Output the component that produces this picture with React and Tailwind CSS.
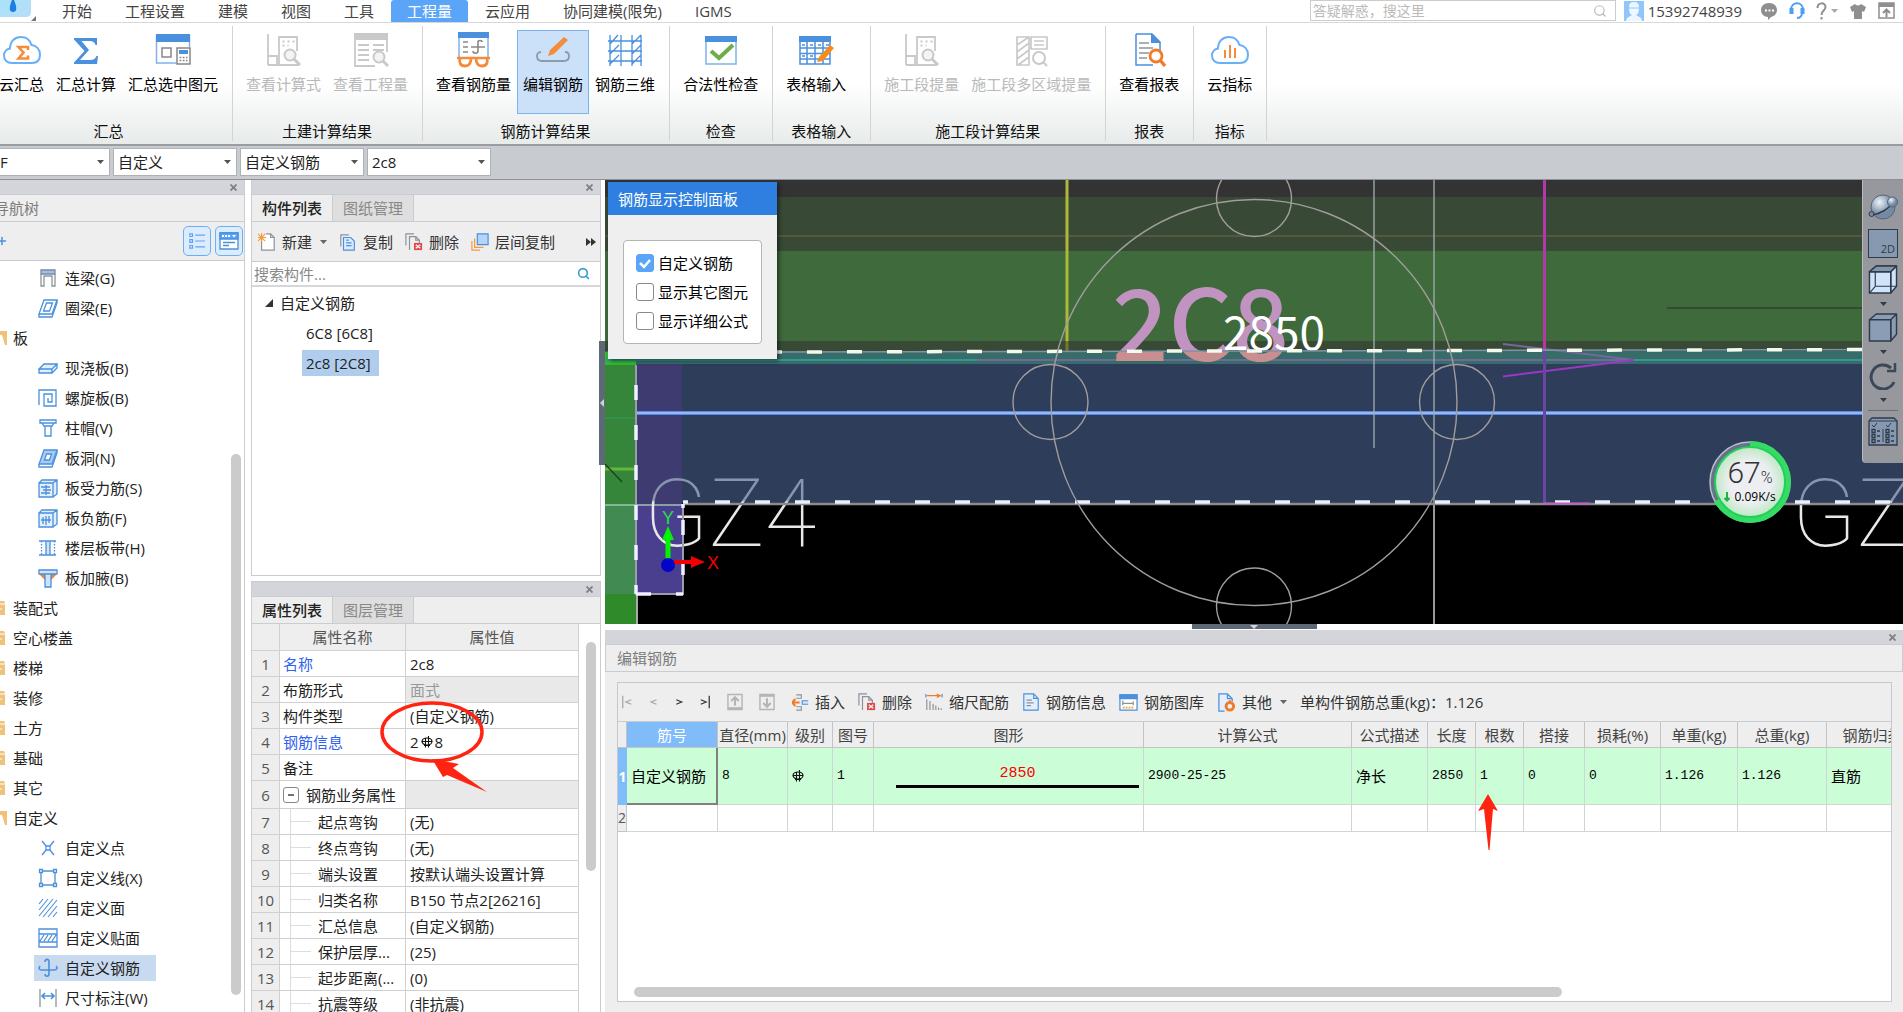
import React, { useState } from 'react';
import { Search, Plus } from 'lucide-react';
import clsx from 'clsx';

const BLUE = '#4a90dd';
const GRAY = '#c9c9c9';

// ---------- shared bits ----------

const Svg = ({ size = 20, children, className = '' }) => (
  <svg width={size} height={size} viewBox="0 0 20 20" fill="none" stroke={BLUE} strokeWidth="1.3" className={clsx('shrink-0', className)} aria-hidden="true">
    {children}
  </svg>
);

const Caret = ({ className = 'text-[#555]' }) => (
  <svg width="7" height="4" viewBox="0 0 7 4" className={clsx('shrink-0', className)} aria-hidden="true">
    <path d="M0 0h7L3.5 4z" fill="currentColor" />
  </svg>
);

const Rebar = () => (
  <svg width="12" height="12" viewBox="0 0 12 12" fill="none" stroke="#111" className="inline-block shrink-0" aria-label="C">
    <ellipse cx="6" cy="5.500" rx="5" ry="3.500" strokeWidth="1.200" />
    <path d="M4.500 2v9.500M7.500 0v11.500M1 5.500h10M3 9.500h6" strokeWidth="1.100" />
  </svg>
);

const PanelStrip = () => (
  <div className="flex h-[14px] shrink-0 items-center justify-end bg-[#d3d5db] pr-1.5">
    <button aria-label="关闭" className="flex size-2.5 items-center justify-center text-[#808080]">
      <svg width="7" height="7" viewBox="0 0 7 7" stroke="currentColor" strokeWidth="1.8"><path d="M.5.5l6 6M6.5.5l-6 6" /></svg>
    </button>
  </div>
);

const PanelTabs = ({ tabs }) => {
  const [active, setActive] = useState(0);
  return (
    <div className="flex h-7 shrink-0 border-y border-[#c9ccd1] bg-[#eee]">
      {tabs.map((t, i) => (
        <button
          key={t}
          onClick={() => setActive(i)}
          className={clsx('w-[81px] border-r border-[#c9ccd1]', i === active ? 'font-medium text-[#222]' : 'bg-[#dedede] text-[#888]')}
        >
          {t}
        </button>
      ))}
    </div>
  );
};

// ---------- ribbon icons (36 x 36) ----------

const Big = ({ children }) => (
  <svg width="36" height="36" viewBox="0 0 36 36" fill="none" aria-hidden="true">{children}</svg>
);

const cloud = 'M9 31C4 31 1 28 1 23.500C1 19.500 4 17 7 16.500C7 9 12 5 18 5C23 5 27 8 28.500 13C33 13.500 37 17 37 22.500C37 28 34 31 29 31Z';

const CloudSum = () => (
  <svg width="40" height="36" viewBox="0 0 38 36" fill="none" aria-hidden="true">
    <path d={cloud} stroke="#6ab0f8" strokeWidth="2" />
    <path d="M25 18v-3H15.500l5 5.500-5 6H25v-3" stroke="#f58c3c" strokeWidth="2.600" />
  </svg>
);
const CloudIndex = () => (
  <svg width="40" height="36" viewBox="0 0 38 36" fill="none" aria-hidden="true">
    <path d={cloud} stroke="#6ab0f8" strokeWidth="2" />
    <path d="M14 18v8M19 13v13M24 16v10" stroke="#f58c3c" strokeWidth="2" />
  </svg>
);
const Sigma = () => (
  <Big><path d="M6 6h23v7h-1.500c-1-3-2.500-4-6-4h-8L21 18l-9 10h10c3.500 0 5-1 6.500-4H30l-1 8H6v-1.500L16.500 19 6 7.500z" fill="#4a90dd" /></Big>
);
const SumPick = () => (
  <Big>
    <path d="M1.500 3v28h20M34.500 3v12" stroke="#7fb2ea" strokeWidth="1.500" />
    <path d="M1 2h34v8H1z" fill="#4a90dd" />
    <path d="M7 16h9v9H7z" stroke="#888" strokeWidth="1.500" />
    <path d="M22 16h13v16H22z" fill="#fff" stroke="#888" strokeWidth="1.500" />
    <path d="M24 18h9v4h-9z" fill="#4a90dd" />
    <path d="M24.500 25.500h8M24.500 28.500h8" stroke="#888" strokeWidth="1.600" strokeDasharray="1.800 1.400" />
  </Big>
);
const CheckCalc = () => (
  <Big>
    <path d="M2 2v31M2 24h9v9M2 33h31M13 19V5h18v14M13 19v14" stroke={GRAY} strokeWidth="1.800" />
    <path d="M16.500 9.500h12M16.500 13.500h6" stroke={GRAY} strokeWidth="2" strokeDasharray="2 3" />
    <circle cx="24" cy="23" r="5.500" fill="#f4f4f4" stroke={GRAY} strokeWidth="2" />
    <path d="M28 27l6 6" stroke={GRAY} strokeWidth="3" />
  </Big>
);
const CheckQty = () => (
  <Big>
    <path d="M1 1h34v7H1z" fill={GRAY} />
    <path d="M2 8v26h20M34 8v12M5 13h11M20 13h11M5 18h11M20 18h11M5 23h11M5 28h11" stroke={GRAY} strokeWidth="1.800" />
    <circle cx="26" cy="25" r="5.500" fill="#f4f4f4" stroke={GRAY} strokeWidth="2" />
    <path d="M30 29l5 5" stroke={GRAY} strokeWidth="3" />
  </Big>
);
const RebarQty = () => (
  <Big>
    <path d="M3 1v25M32 1v25" stroke="#7fb2ea" strokeWidth="1.500" />
    <path d="M2 0h31v6H2z" fill="#4a90dd" />
    <path d="M7 10h5M7 15h5M7 20h5M15 15h14M22 10c0-2 4-2 4 0M22 10v9c0 3-5 3-5 0" stroke="#888" strokeWidth="1.600" />
    <path d="M1 26h33" stroke="#f58c3c" strokeWidth="2.500" />
    <path d="M4 26c-1 4 0 8 5 8 4 0 6-3 6-8M20 26c0 5 2 8 6 8 5 0 6-4 5-8" stroke="#f58c3c" strokeWidth="2.800" />
  </Big>
);
const RebarEdit = () => (
  <Big>
    <path d="M6 20c-3 0-4 2-4 4 0 3 2 5 5 5h22c3 0 5-2 5-5 0-2-1-4-4-4" stroke="#8e9aa8" strokeWidth="1.800" />
    <path d="M15 18L29 5l4 3-14 14-6 2z" fill="#f58c3c" />
  </Big>
);
const Rebar3D = () => (
  <Big>
    <path d="M3 3v31M14 3v31M25 3v31M34 3v31M1 9h34M1 19h34M1 29h34M3 12l8-9M25 12l9-9M3 22l9-9M25 22l9-9M3 32l9-9M25 32l9-9" stroke={BLUE} strokeWidth="1.300" />
  </Big>
);
const Legal = () => (
  <Big>
    <path d="M3 5h30v27H3z" fill="#fff" stroke="#7fb2ea" strokeWidth="1.500" />
    <path d="M2 4h32v6H2z" fill="#4a90dd" />
    <path d="M8 19l8 7 14-13" stroke="#6fad4a" strokeWidth="4" />
  </Big>
);
const TableIn = () => (
  <Big>
    <path d="M2 5h30v27H2zM9 10v22M17 10v22M25 10v22M2 16h30M2 21.500h30M2 27h30" stroke={BLUE} strokeWidth="1.500" />
    <path d="M1 4h32v6H1z" fill="#4a90dd" />
    <path d="M4 13h3M12 13h3M20 13h3M28 13h3M4 24h3M12 24h3" stroke={BLUE} strokeWidth="1.300" />
    <path d="M21 25L32 13l4 3-11 13-6 1z" fill="#f58c1c" />
  </Big>
);
const MultiZone = () => (
  <Big>
    <path d="M4 5h12v28H4zM18 5h16v12H18zM16 5v28M4 13l12-8M4 20l12-9M4 27l12-9M5 33l11-8M21 9h10M21 13h10" stroke={GRAY} strokeWidth="1.700" />
    <circle cx="26" cy="26" r="6" stroke={GRAY} strokeWidth="2" />
    <path d="M30 30l4 4" stroke={GRAY} strokeWidth="2" />
  </Big>
);
const Report = () => (
  <Big>
    <path d="M5 2h16l8 8v10M5 2v31h17" stroke={BLUE} strokeWidth="1.500" />
    <path d="M20 1l10 10H20z" fill="#4a90dd" />
    <path d="M8 11h10M8 16h14M8 21h10M8 26h8" stroke="#8c959e" strokeWidth="1.600" />
    <circle cx="25" cy="24" r="6" stroke="#f07c2a" strokeWidth="2.800" fill="#fff" />
    <path d="M29 28l5 6" stroke="#f07c2a" strokeWidth="3.500" />
  </Big>
);

const RIBBON = [
  { title: '汇总', items: [['云汇总', CloudSum], ['汇总计算', Sigma], ['汇总选中图元', SumPick]] },
  { title: '土建计算结果', items: [['查看计算式', CheckCalc, true], ['查看工程量', CheckQty, true]] },
  { title: '钢筋计算结果', items: [['查看钢筋量', RebarQty], ['编辑钢筋', RebarEdit], ['钢筋三维', Rebar3D]] },
  { title: '检查', items: [['合法性检查', Legal]] },
  { title: '表格输入', items: [['表格输入', TableIn]], wide: true },
  { title: '施工段计算结果', items: [['施工段提量', CheckCalc, true], ['施工段多区域提量', MultiZone, true]] },
  { title: '报表', items: [['查看报表', Report]] },
  { title: '指标', items: [['云指标', CloudIndex]] },
];

const MENU = ['开始', '工程设置', '建模', '视图', '工具', '工程量', '云应用', '协同建模(限免)', 'IGMS'];

const TopBar = () => (
  <header className="flex h-[23px] items-start border-b border-[#d8d8d8] bg-white">
    <div className="relative h-full w-[46px] shrink-0">
      <svg width="40" height="23" viewBox="0 0 40 23" aria-hidden="true">
        <defs>
          <linearGradient id="logo" x1="0" y1="0" x2="1" y2="1"><stop stopColor="#a9e3fb" /><stop offset="1" stopColor="#b9dcf7" /></linearGradient>
        </defs>
        <path d="M0 0h31v12q0 5-5 5H0z" fill="url(#logo)" />
        <path d="M12 0q-5 12 1 12T14 0z" fill="#1c7fe0" />
        <path d="M36 16v5h-5z" fill="#777" />
      </svg>
    </div>
    <nav className="flex h-full gap-px">
      {MENU.map((m) => (
        <button key={m} className={clsx('h-full px-4 text-[#444]', m === '工程量' && 'rounded-t-[3px] bg-[#5aa5f7] text-white')}>{m}</button>
      ))}
    </nav>
    <div className="ml-auto flex items-center pr-2">
      <label className="flex h-[21px] w-[306px] items-center border border-[#ccc] pr-2">
        <input aria-label="搜索" placeholder="答疑解惑，搜这里" className="min-w-0 flex-1 px-0.5 text-sm outline-none placeholder:text-[#bbb]" />
        <Search size={14} className="text-[#bbb]" />
      </label>
      <svg width="20" height="20" viewBox="0 0 20 20" className="mr-1 ml-2" aria-hidden="true">
        <path d="M0 0h20v20H0z" fill="#90c6fa" />
        <path d="M5 6q0-5 5-5t5 5v1q0 6-3 7l5 3 1 3H2l1-3 5-3Q5 13 5 7z" fill="#eef7ff" />
        <path d="M4 7h12" stroke="#90c6fa" />
      </svg>
      <span className="text-[#444]">15392748939</span>
      <div className="ml-[18px] flex items-center gap-[11px] text-[#8f8f8f]">
        <button aria-label="消息">
          <svg width="18" height="18" viewBox="0 0 18 18"><path d="M9 1c5 0 8 3 8 7 0 3-2 6-6 7l-3 3v-3c-4 0-7-3-7-7 0-4 3-7 8-7z" fill="currentColor" /><path d="M5 8.500h9" stroke="#fff" strokeWidth="2" strokeDasharray="2 1.500" /></svg>
        </button>
        <button aria-label="客服">
          <svg width="16" height="18" viewBox="0 0 16 18" fill="none" stroke="#4a9ef5"><path d="M2 8c0-9 12-9 12 0" strokeWidth="2" /><path d="M2.500 6v6M13.500 6v6" strokeWidth="4" /><path d="M13 12q-1 4-5 4" strokeWidth="2" /></svg>
        </button>
        <button aria-label="帮助" className="flex items-center gap-1">
          <svg width="11" height="18" viewBox="0 0 11 18" fill="none" stroke="currentColor" strokeWidth="2"><path d="M1.500 6c0-6 8-6 8-1 0 4-4 3-4 8M5.500 15v2.500" /></svg>
          <Caret className="text-[#aaa]" />
        </button>
        <button aria-label="皮肤">
          <svg width="18" height="18" viewBox="0 0 18 18"><path d="M6 2q3 3 6 0l5 3-2 5-2-1v8H5V9l-2 1-2-5z" fill="currentColor" /></svg>
        </button>
        <button aria-label="收起">
          <svg width="17" height="17" viewBox="0 0 17 17" fill="none" stroke="currentColor"><path d="M1 1h15v15H1z" strokeWidth="1.500" /><path d="M1 3h15" strokeWidth="4" /><path d="M8.500 15V8M5 11l3.500-3.500L12 11" strokeWidth="2" /></svg>
        </button>
      </div>
    </div>
  </header>
);

const Ribbon = () => (
  <div className="flex h-[123px] overflow-hidden border-b-2 border-[#999da2] bg-linear-to-b from-white from-50% to-[#e7ebea] py-[3px]">
    <div className="-ml-3.5 flex">
      {RIBBON.map((g) => (
        <section key={g.title} className={clsx('flex flex-col border-r border-[#d3d3d3] pr-2 pl-[7px]', g.wide && 'w-[98px]')}>
          <div className="flex h-[95px] pt-1">
            {g.items.map(([name, Icon, off]) => (
              <button
                key={name}
                disabled={off}
                className={clsx(
                  'flex h-[84px] flex-col items-center border px-[5px] whitespace-nowrap',
                  name === '编辑钢筋' ? 'border-[#7db4ee] bg-[#cbe1f9]' : 'border-transparent',
                  off ? 'text-[#b9b9b9]' : 'text-black'
                )}
              >
                <span className="flex h-[38px] items-center"><Icon /></span>
                <span className="mt-[5px]">{name}</span>
              </button>
            ))}
          </div>
          <div className="text-center text-[#111]">{g.title}</div>
        </section>
      ))}
    </div>
  </div>
);

const COMBOS = [['楼层', 'F'], ['类型', '自定义'], ['构件类型', '自定义钢筋'], ['构件', '2c8']];

const ComboBar = () => (
  <div className="flex h-[34px] gap-[3px] overflow-hidden border-b border-[#8d9096] bg-[#c8cbd0] pt-0.5">
    {COMBOS.map(([label, v], i) => (
      <div key={label} className={clsx('relative', i === 0 ? 'w-[110px]' : 'w-[124px]')}>
        <select aria-label={label} defaultValue={v} className={clsx('h-7 w-full appearance-none border border-[#aeb1b5] bg-white outline-none', i === 0 ? 'border-l-0 pl-0' : 'pl-1')}>
          <option>{v}</option>
        </select>
        <span className="pointer-events-none absolute top-3 right-1.5 flex"><Caret /></span>
      </div>
    ))}
  </div>
);

// ---------- navigation tree ----------

const NAV_ICONS = {
  lianliang: <><path d="M3 2h14v4H3z" fill="#9bc1ee" stroke="#7b8a99" /><path d="M3 6v12h3V8h8v10h3V6" stroke="#8a949e" /></>,
  quanliang: <><path d="M6 2h13l-5 14H1zM8.500 5h6l-3 8h-6z" /><path d="M1 16v3h13l5-14V2" /></>,
  xianjiao: <path d="M1 11l5-5h13l-5 5zM1 11v4h13v-4M14 15l5-5V6" fill="#e3effc" />,
  luoxuan: <path d="M1 17V2h17v16H6V6h8v8h-4v-4" />,
  zhumao: <path d="M2 2h16v3H2zM4 5l2 3h8l2-3M7 8v10h6V8" />,
  bandong: <><path d="M6 2h13l-5 14H1z" fill="#a9cbf2" /><path d="M8.500 6h5l-2 6h-5z" fill="#fff" /><path d="M1 16v3h13l5-14V2" /></>,
  shouli: <><path d="M1 5h14v14H1zM1 5l3-3h15v14l-4 3M15 5l4-3" fill="#e3effc" /><path d="M3 9h9M3 15h9M8 7v10M5 12h8" /></>,
  fujin: <><path d="M1 5h14v14H1zM1 5l3-3h15v14l-4 3M15 5l4-3" fill="#e3effc" /><path d="M3 12h10M5 16V9M8 8v9M11 8v7" /></>,
  bandai: <><path d="M1 3h17M1 17h17M8 3h4v14H8z" fill="#cfe2f9" /><path d="M3.500 3v14M16.500 3v14" strokeDasharray="1.500 1.500" /></>,
  jiaye: <><path d="M1 6l6 6V6zM19 6l-6 6V6z" fill="#f58220" stroke="none" /><path d="M1 2h18v4H1zM7 6v13h6V6" fill="#cfe2f9" /></>,
  dian: <><path d="M4 3l4 5M12 12l4 5M16 3l-4 5M8 12l-4 5" /><path d="M8 8h4v4H8z" /></>,
  xian: <><path d="M3 3h14v14H3z" /><path d="M1.500 1.500h3v3h-3zM15.500 1.500h3v3h-3zM1.500 15.500h3v3h-3zM15.500 15.500h3v3h-3z" fill="#fff" /></>,
  mian: <path d="M1 6l4-5M1 12L10 1M1 18L15 1M5 19L19 2M10 19l9-11M15 19l4-5" strokeWidth="1.100" />,
  tiemian: <path d="M1 1h18v18H1zM1 6h18M1 14h18M2 13l4-6M6 13l4-6M10 13l4-6M14 13l4-6" />,
  gangjin: <path d="M2 8c-2 3 0 4 2 4h12c3 0 4-2 2-4M7 4c0-3 4-4 4 0v12c0 3-4 3-4 0" strokeWidth="1.600" />,
  chicun: <><path d="M2 1v18M18 1v18" stroke="#8a949e" /><path d="M4 8h12M7 5L4 8l3 3M13 5l3 3-3 3" strokeWidth="1.600" /></>,
};

const NAV = [
  ['lianliang', '连梁(G)'], ['quanliang', '圈梁(E)'], [null, '板', true], ['xianjiao', '现浇板(B)'], ['luoxuan', '螺旋板(B)'],
  ['zhumao', '柱帽(V)'], ['bandong', '板洞(N)'], ['shouli', '板受力筋(S)'], ['fujin', '板负筋(F)'], ['bandai', '楼层板带(H)'],
  ['jiaye', '板加腋(B)'], [null, '装配式'], [null, '空心楼盖'], [null, '楼梯'], [null, '装修'], [null, '土方'], [null, '基础'],
  [null, '其它'], [null, '自定义', true], ['dian', '自定义点'], ['xian', '自定义线(X)'], ['mian', '自定义面'],
  ['tiemian', '自定义贴面'], ['gangjin', '自定义钢筋'], ['chicun', '尺寸标注(W)'],
];

const NavTree = () => (
  <aside className="flex w-[245px] shrink-0 flex-col border-r border-[#c9ccd1] bg-white">
    <PanelStrip />
    <div className="flex h-7 shrink-0 items-center overflow-hidden border-y border-[#c9ccd1] bg-[#eee] text-[#7c7c7c]">
      <span className="-ml-1.5">导航树</span>
    </div>
    <div className="flex h-[39px] shrink-0 items-center border-b border-[#c9ccd1] bg-[#eee]">
      <button aria-label="添加" className="-ml-1"><Plus size={12} strokeWidth={3} color={BLUE} /></button>
      <div className="ml-auto flex gap-1 pr-px">
        {['列表', '面板'].map((n, i) => (
          <button key={n} aria-label={n} className="flex h-[30px] w-7 items-center justify-center rounded-[5px] border border-[#6ab0f8] bg-[#dcecfc]">
            {i === 0
              ? <Svg size={18}><path d="M2 2h3v3H2zM2 8.500h3v3H2zM2 15h3v3H2zM8 3.500h11M8 10h11M8 16.500h11" stroke="#5aa5f7" /></Svg>
              : <Svg size={20}><path d="M1 2h18v16H1z" fill="#fff" /><path d="M1 2h18v6H1z" fill="#5aa5f7" /><path d="M3 5h8" stroke="#fff" strokeWidth="2" strokeDasharray="2 1" /><path d="M13 4h4l-2 2.500z" fill="#fff" stroke="none" /><path d="M4 11.500h12M4 14.500h6" /></Svg>}
          </button>
        ))}
      </div>
    </div>
    <div className="relative min-h-0 flex-1 overflow-hidden pt-0.5">
      <ul>
        {NAV.map(([icon, name, open]) => (
          <li key={name} className="flex h-[30px] items-center">
            {icon ? (
              <button className={clsx('ml-[34px] flex h-[26px] items-center gap-[7px] px-1 pr-4', name === '自定义钢筋' && 'bg-[#c8daf0]')}>
                <Svg>{NAV_ICONS[icon]}</Svg>{name}
              </button>
            ) : (
              <button className="flex items-center gap-1.5">
                <svg width="7" height="16" viewBox="0 0 7 16" aria-hidden="true">
                  {open ? <path d="M0 1h7v14H5L2 5H0z" fill="#efc27a" /> : <><path d="M0 1h4l1 2v12H0z" fill="#efc27a" /><path d="M0 4h5M0 9h2" stroke="#fff" /></>}
                </svg>
                {name}
              </button>
            )}
          </li>
        ))}
      </ul>
      <div className="absolute top-[193px] right-[3px] h-[541px] w-2.5 rounded-full bg-[#cbcbcb]" />
    </div>
  </aside>
);

// ---------- component list + properties ----------

const DeleteIcon = ({ size = 18 }) => (
  <Svg size={size}>
    <path d="M1 14V1h9M5 19V4h7l4 4v4M12 4v4h4" stroke="#8c9299" />
    <path d="M10 11h9v8h-9z" fill="#e14b4b" stroke="none" /><path d="M12 13l5 4M17 13l-5 4" stroke="#fff" />
  </Svg>
);

const ToolButton = ({ icon, children, caret }) => (
  <button className="flex items-center gap-1.5 whitespace-nowrap text-[#333]">
    {icon}<span>{children}</span>{caret && <Caret className="ml-0.5 text-[#666]" />}
  </button>
);

const ComponentList = () => (
  <section className="flex h-[396px] shrink-0 flex-col border border-t-0 border-[#c9ccd1] bg-white">
    <PanelStrip />
    <PanelTabs tabs={['构件列表', '图纸管理']} />
    <div className="flex h-10 shrink-0 items-center gap-3 border-b border-[#c9ccd1] bg-[#eee] pr-1 pl-1.5">
      <ToolButton caret icon={<Svg size={18}><path d="M4 6v13h14V5l-4-4H9M14 1v4h4" stroke="#8c9299" fill="#fff" /><path d="M0 1l8 8M8 1L0 9M4 0v10M0 5h9" stroke="#f79a3c" strokeWidth="1.200" /></Svg>}>新建</ToolButton>
      <ToolButton icon={<Svg size={18}><path d="M2 15V2h9" stroke="#8c9299" /><path d="M5 5h8l4 4v10H5zM8 11h6M8 14h6M8 8h3" fill="#dcebfc" /></Svg>}>复制</ToolButton>
      <ToolButton icon={<DeleteIcon />}>删除</ToolButton>
      <ToolButton icon={<Svg size={18}><path d="M1 9v10h9M4 6v10h10" stroke="#f79a3c" /><path d="M7 1h12v12H7z" fill="#b5d4f8" /></Svg>}>层间复制</ToolButton>
      <button aria-label="更多" className="ml-auto">
        <svg width="10" height="8" viewBox="0 0 10 8"><path d="M0 0l5 4-5 4zM5 0l5 4-5 4z" fill="#333" /></svg>
      </button>
    </div>
    <label className="flex h-[25px] shrink-0 items-center border-b-2 border-[#d5d7db] pr-2.5 pl-0.5">
      <input aria-label="搜索构件" placeholder="搜索构件..." className="min-w-0 flex-1 outline-none placeholder:text-[#888]" />
      <Search size={13} color="#3a9bd0" strokeWidth={3} />
    </label>
    <ul className="pt-px">
      <li className="flex h-[30px] items-center gap-[7px] pl-[13px]">
        <svg width="8" height="8" viewBox="0 0 8 8" aria-hidden="true"><path d="M8 0v8H0z" fill="#333" /></svg>自定义钢筋
      </li>
      <li className="flex h-[30px] items-center pl-[50px]"><button className="h-[26px] px-1">6C8 [6C8]</button></li>
      <li className="flex h-[30px] items-center pl-[50px]"><button className="h-[26px] bg-[#b1cdee] pr-2 pl-1">2c8 [2C8]</button></li>
    </ul>
  </section>
);

const PROPS = [
  ['名称', '2c8', 'link'], ['布筋形式', '面式', 'off'], ['构件类型', '(自定义钢筋)'], ['钢筋信息', null, 'link'], ['备注', ''],
  ['钢筋业务属性', '', 'group'], ['起点弯钩', '(无)', 'sub'], ['终点弯钩', '(无)', 'sub'], ['端头设置', '按默认端头设置计算', 'sub'],
  ['归类名称', 'B150 节点2[26216]', 'sub'], ['汇总信息', '(自定义钢筋)', 'sub'], ['保护层厚...', '(25)', 'sub'],
  ['起步距离(...', '(0)', 'sub'], ['抗震等级', '(非抗震)', 'sub'],
];

const PropertyPanel = () => (
  <section className="relative flex min-h-0 flex-1 flex-col overflow-hidden border border-b-0 border-[#c9ccd1] bg-white">
    <PanelStrip />
    <PanelTabs tabs={['属性列表', '图层管理']} />
    <table className="w-[327px] table-fixed border-separate border-spacing-0">
      <colgroup><col className="w-7" /><col className="w-[126px]" /><col /></colgroup>
      <thead>
        <tr className="h-[27px] bg-[#eee] text-[#555]">
          <th className="border-r border-b border-[#d0d0d0]" />
          <th className="border-r border-b border-[#d0d0d0] font-normal">属性名称</th>
          <th className="border-r border-b border-[#d0d0d0] font-normal">属性值</th>
        </tr>
      </thead>
      <tbody>
        {PROPS.map(([name, value, kind], i) => (
          <tr key={name} className={kind === 'group' ? 'h-7' : 'h-[26px]'}>
            <td className="border-r border-b border-[#d0d0d0] bg-[#eee] text-center text-[#555]">{i + 1}</td>
            <td className={clsx('border-r border-b border-[#d0d0d0] whitespace-nowrap', kind === 'link' && 'text-[#2f62f0]')}>
              {kind === 'group' && (
                <span className="flex items-center gap-[7px] pl-[3px]">
                  <button aria-label="收起" className="flex size-4 items-center justify-center rounded-[3px] border border-[#888] text-[#444]">
                    <svg width="6" height="2" viewBox="0 0 6 2"><path d="M0 1h6" stroke="currentColor" strokeWidth="1.500" /></svg>
                  </button>
                  {name}
                </span>
              )}
              {kind === 'sub' && (
                <span className="ml-2.5 flex h-[25px] items-center gap-[7px] border-l border-[#ddd]">
                  <span className="h-px w-5 bg-[#ddd]" />{name}
                </span>
              )}
              {kind !== 'group' && kind !== 'sub' && <span className="pl-[3px]">{name}</span>}
            </td>
            <td className={clsx('border-r border-b border-[#d0d0d0] pl-1 whitespace-nowrap', kind === 'off' && 'bg-[#e9e9e9] text-[#999]', kind === 'group' && 'bg-[#e9e9e9]')}>
              {value ?? <span className="flex items-center gap-0.5">2<Rebar />8</span>}
            </td>
          </tr>
        ))}
      </tbody>
    </table>
    <div className="absolute top-[60px] right-1 h-[229px] w-2.5 rounded-full bg-[#cbcbcb]" />
    <svg width="120" height="96" viewBox="376 696 120 96" className="pointer-events-none absolute top-[115px] left-[124px]" aria-hidden="true">
      <ellipse cx="432" cy="731" rx="50" ry="29" fill="none" stroke="#ff2412" strokeWidth="3.500" />
      <path d="M432 758l27 5-6 4 34 24-40-17-4 2z" fill="#ff2412" />
    </svg>
  </section>
);

// ---------- CAD viewport ----------

const Drawing = () => (
  <svg className="h-full w-full" viewBox="605 180 1298 444" preserveAspectRatio="xMinYMin slice" fill="none">
    <defs>
      <linearGradient id="mark" gradientUnits="userSpaceOnUse" x1="0" y1="280" x2="0" y2="370">
        <stop offset="0.78" stopColor="#c093c0" /><stop offset="0.78" stopColor="#c98f90" />
      </linearGradient>
      <linearGradient id="col" gradientUnits="userSpaceOnUse" x1="0" y1="440" x2="0" y2="560">
        <stop offset="0.500" stopColor="#8795ae" /><stop offset="0.520" stopColor="#e8e8e8" />
      </linearGradient>
    </defs>
    <path d="M605 180h1298v444H605z" fill="#000" />
    <path d="M605 180h1298v17H605z" fill="#333" />
    <path d="M605 197h1298v54H605z" fill="#384a36" />
    <path d="M605 251h1298v90H605z" fill="#3f6a3b" />
    <path d="M605 341h1298v10H605z" fill="#384a36" />
    <path d="M605 351h1298v13H605z" fill="#386c69" />
    <path d="M605 364h1298v139H605z" fill="#2e3d5a" />
    <path d="M605 236h1298" stroke="#55573f" strokeWidth="2" />
    <path d="M1667 308h236" stroke="#344a32" strokeWidth="2" />

    {/* left slab edge and column */}
    <path d="M605 352h31v13h-31z" fill="#33b92f" />
    <path d="M605 365h31v140h-31z" fill="#35863b" />
    <path d="M605 505h31v89h-31z" fill="#418a52" />
    <path d="M605 594h31v30h-31z" fill="#2f8a2a" />
    <path d="M605 418h31" stroke="#2f9b5c" />
    <path d="M605 469h31" stroke="#63b636" strokeWidth="3" />
    <path d="M605 464l17 18" stroke="#1f4020" strokeWidth="1.500" />
    <path d="M636 364h46v141h-46z" fill="#3d3b70" />
    <path d="M636 505h46v89h-46z" fill="#4a3f8f" />
    <path d="M637 594v30" stroke="#aaa" strokeWidth="2" />
    <path d="M605 505h78" stroke="#9fc4b0" strokeWidth="1.500" />

    {/* beam lines */}
    <path d="M605 360h372M1634 360h269" stroke="#2f9a93" strokeWidth="2" />
    <path d="M977 360h657M1634 360l-131-16" stroke="#71699c" strokeWidth="2" />
    <path d="M1503 376.500l131-16.500" stroke="#9a38c8" strokeWidth="2" />
    <path d="M636 413h1267" stroke="#5b88dc" strokeWidth="4" />
    <path d="M636 413h1267" stroke="#93b8fb" strokeWidth="2" />
    <path d="M1067 180v161" stroke="#b0b838" strokeWidth="3" />
    <path d="M1067 341v10" stroke="#75762c" strokeWidth="3" />
    <path d="M1374 180v268M1434 180v323" stroke="#a3b0b0" strokeWidth="1.300" />
    <path d="M1434 503v121" stroke="#ccc" strokeWidth="1.500" />
    <path d="M1544.500 180v170" stroke="#b33aa6" strokeWidth="3" />
    <path d="M1544.500 350v153" stroke="#6b44a4" strokeWidth="3" />

    {/* member marks */}
    <text x="1112" y="361" fontSize="99" fill="url(#mark)" className="font-['Noto_Sans_CJK_SC',sans-serif] font-medium">2C8</text>
    <text x="1223" y="350" fontSize="46" fill="#fff" className="font-['Noto_Sans_CJK_SC',sans-serif]">2850</text>
    <text x="644" y="546" fontSize="94" fill="url(#col)" className="font-[Roboto,sans-serif] font-thin">GZ4</text>
    <text x="1792" y="546" fontSize="94" fill="url(#col)" className="font-[Roboto,sans-serif] font-thin">GZ4</text>

    {/* selection outline */}
    <path d="M777 352L1903 349.500" stroke="#7f93a8" strokeWidth="1.500" />
    <path d="M767 352L1903 349.500" stroke="#f4f8ee" strokeWidth="3.500" strokeDasharray="15 25" />
    <path d="M683 504h1220" stroke="#8b8b8b" strokeWidth="2.500" />
    <path d="M683 502h5M715 502h1188" stroke="#e8f0fc" strokeWidth="3.500" strokeDasharray="15 25" />
    <path d="M636 365v229h47v-90" stroke="#9d9dac" strokeWidth="2" />
    <path d="M636 385v209M683 520v74M636 594h47M683 504v4" stroke="#f0f0ff" strokeWidth="3.500" strokeDasharray="15 25" />
    <path d="M1544 503.500h46" stroke="#c060c0" strokeWidth="2" />

    <g stroke="#a19d9c" strokeWidth="1.400">
      <circle cx="1254" cy="402.500" r="203" />
      <circle cx="1050.500" cy="402" r="37.500" />
      <circle cx="1457" cy="402" r="37.500" />
      <circle cx="1254" cy="199" r="37.500" />
      <circle cx="1254" cy="605.500" r="37.500" />
    </g>

    {/* origin axes */}
    <path d="M668 560v-22" stroke="#00f400" strokeWidth="5" /><path d="M662 540l6-14 6 14z" fill="#00f400" />
    <path d="M674 562h18" stroke="#f20000" strokeWidth="4" /><path d="M691 556l14 6-14 6z" fill="#f20000" />
    <circle cx="668" cy="565" r="7" fill="#0404c8" />
    <text x="662" y="524" fontSize="18" fill="#22e03c" className="font-['Liberation_Sans',sans-serif]">Y</text>
    <text x="707" y="569" fontSize="18" fill="#f20000" className="font-['Liberation_Sans',sans-serif]">X</text>
  </svg>
);

const OPTIONS = [['自定义钢筋', true], ['显示其它图元', false], ['显示详细公式', false]];

const DisplayPanel = () => (
  <div className="absolute top-0.5 left-[3px] w-[169px] bg-[#efefef] shadow-[2px_2px_4px_rgba(0,0,0,0.5)]">
    <div className="flex h-[33px] items-center bg-[#2e7fe0] pl-2.5 text-white">钢筋显示控制面板</div>
    <div className="p-[15px] pt-[25px]">
      <div className="flex h-[104px] flex-col justify-center rounded border border-[#b4b4b4] bg-white pl-3">
        {OPTIONS.map(([name, on]) => (
          <label key={name} className="flex h-[29px] items-center gap-1 text-black">
            <span className="relative flex size-[18px] shrink-0">
              <input type="checkbox" defaultChecked={on} className="peer size-[18px] appearance-none rounded-[3px] border border-[#8a8a8a] bg-white checked:border-[#5aa5f7] checked:bg-[#5aa5f7]" />
              <svg viewBox="0 0 18 18" className="pointer-events-none absolute inset-0 hidden peer-checked:block" fill="none" stroke="#fff" strokeWidth="2.500"><path d="M4 9l4 4 6-7" /></svg>
            </span>
            <span className="whitespace-nowrap">{name}</span>
          </label>
        ))}
      </div>
    </div>
  </div>
);

const Cube = ({ open }) => (
  <svg width="30" height="29" viewBox="0 0 30 30" stroke="#2e3b4a" strokeWidth="1.500" strokeLinejoin="round">
    <path d="M1 7l7-6h21l-6 6zM23 7l6-6v21l-6 7z" fill={open ? '#cfe4fb' : '#8a9db5'} />
    <path d="M1 7h22v22H1z" fill={open ? '#cfe4fb' : '#8a9db5'} />
    {open && <><path d="M1 7l7-6h21l-6 6z" fill="#8295ad" /><path d="M7 7v15h16M1 29l6-7M23 22l6 0" fill="none" strokeWidth="1.200" /></>}
  </svg>
);

const ViewTools = () => (
  <div className="absolute top-0 right-0 flex h-[283px] w-[41px] flex-col items-center rounded-bl border-l border-[#b9babd] bg-[#97989d] pt-3 text-[#2e3b4a]">
    <button aria-label="动态观察">
      <svg width="30" height="30" viewBox="0 0 30 30">
        <defs><radialGradient id="ball" cx="0.35" cy="0.3"><stop stopColor="#eef4fa" /><stop offset="1" stopColor="#7489a3" /></radialGradient></defs>
        <circle cx="15" cy="15" r="12" fill="url(#ball)" stroke="#53667c" />
        <path d="M4 23C12 22 21 17 25 10" fill="none" stroke="#2e3b4a" strokeWidth="1.500" />
        <circle cx="24.500" cy="10" r="5" fill="url(#ball)" stroke="#53667c" />
        <circle cx="3.500" cy="22" r="2.500" fill="#7489a3" stroke="#2e3b4a" />
      </svg>
    </button>
    <button className="mt-[7px] flex h-[29px] w-[30px] items-end justify-end border border-[#2e3b4a] bg-[#8799b0] px-0.5 text-[11px] leading-4">2D</button>
    <button aria-label="线框" className="mt-[7px]"><Cube open /></button>
    <Caret className="mt-2 shrink-0 text-[#2e3b4a]" />
    <button aria-label="实体" className="mt-[7px]"><Cube /></button>
    <Caret className="mt-2 shrink-0 text-[#2e3b4a]" />
    <button aria-label="旋转" className="mt-2">
      <svg width="28" height="28" viewBox="0 0 28 28" fill="none" stroke="#3a4857" strokeWidth="3"><path d="M25 20A12 12 0 1 1 22 6" /><path d="M26 1v8h-8" strokeWidth="2.500" /></svg>
    </button>
    <Caret className="mt-2 shrink-0 text-[#2e3b4a]" />
    <div className="mt-2 h-px w-[30px] shrink-0 bg-[#6d6e72]" />
    <button aria-label="显示设置" className="mt-1.5">
      <svg width="30" height="29" viewBox="0 0 30 29" fill="none" stroke="#2e3b4a">
        <path d="M1 4l3-3h22l3 3v24H1z" fill="#8799b0" strokeWidth="1.300" /><path d="M1 4h28M15 12v13" />
        <path d="M4 8l2 2 3-4M18 8l2 2 3-4" />
        <path d="M4 12.500h3v3H4zM4 17.500h3v3H4zM4 22.500h3v3H4zM18 12.500h3v3h-3zM18 17.500h3v3h-3zM18 22.500h3v3h-3zM9 14h3M9 19h3M9 24h3M23 14h3M23 19h3M23 24h3" strokeWidth="1.300" />
      </svg>
    </button>
  </div>
);

// floating memory / network meter
const Meter = () => (
  <div className="absolute top-[261px] right-[112px] size-[82px]">
    <svg viewBox="0 0 82 82" className="absolute inset-0" aria-hidden="true">
      <defs>
        <radialGradient id="dial"><stop offset="0.600" stopColor="#eceef2" /><stop offset="1" stopColor="#bfe9c4" /></radialGradient>
      </defs>
      <circle cx="41" cy="41" r="40" fill="#66728a" stroke="#b8bfc9" strokeWidth="1.500" />
      <circle cx="41" cy="41" r="38" fill="none" stroke="#35dc63" strokeWidth="6" pathLength="100" strokeDasharray="67 33" transform="rotate(-90 41 41)" />
      <circle cx="41" cy="41" r="35" fill="url(#dial)" stroke="#22cf5a" strokeWidth="2" />
    </svg>
    <div className="relative flex flex-col items-center pt-4 text-[#333]">
      <div className="flex items-baseline font-[Roboto,sans-serif] text-[30px] leading-8 font-light">67<span className="text-base leading-4">%</span></div>
      <div className="flex items-center gap-1 text-xs leading-4 text-black">
        <svg width="6" height="10" viewBox="0 0 6 10" fill="none" stroke="#1bb83c" strokeWidth="2" aria-hidden="true"><path d="M3 0v8M.5 6L3 8.500 5.500 6" /></svg>
        0.09K/s
      </div>
    </div>
  </div>
);

// ---------- rebar editor ----------

const COLS = ['筋号', '直径(mm)', '级别', '图号', '图形', '计算公式', '公式描述', '长度', '根数', '搭接', '损耗(%)', '单重(kg)', '总重(kg)', '钢筋归类'];
const MONO = "font-['Liberation_Mono','Noto_Sans_CJK_SC',monospace] text-[13px]";
const ROW = ['8', <Rebar />, '1', null, '2900-25-25', '净长', '2850', '1', '0', '0', '1.126', '1.126', '直筋'];

const RebarTable = () => {
  const cell = 'border-r border-b border-[#cfd5d0] p-0';
  return (
    <div className="relative min-h-0 flex-1 overflow-hidden bg-white">
      <table className="w-[1301px] table-fixed border-separate border-spacing-0 whitespace-nowrap">
        <colgroup>
          <col className="w-[9px]" /><col className="w-[91px]" /><col className="w-[70px]" /><col className="w-[45px]" /><col className="w-[41px]" />
          <col className="w-[270px]" /><col className="w-[208px]" /><col className="w-[76px]" /><col className="w-12" /><col className="w-12" />
          <col className="w-[61px]" /><col className="w-[76px]" /><col className="w-[77px]" /><col className="w-[89px]" /><col className="w-[92px]" />
        </colgroup>
        <thead>
          <tr className="h-[26px] bg-[#eee] text-[#444]">
            <th className="border-r border-b border-[#c4c4c4] p-0" />
            {COLS.map((c, i) => (
              <th key={c} className={clsx('border-r border-b border-[#c4c4c4] p-0 font-normal', i === 0 && 'bg-[#80bbfa] font-medium text-white')}>{c}</th>
            ))}
          </tr>
        </thead>
        <tbody>
          <tr className="h-[57px] bg-[#cbfdd7] text-black">
            <td className="bg-[#80bbfa] p-0 text-center text-sm font-bold text-white">1</td>
            <td className="border-r-2 border-b-2 border-[#808080] p-0 pl-1">自定义钢筋</td>
            {ROW.map((v, i) => (
              <td key={i} className={clsx(cell, 'pl-1', i !== 5 && i !== 12 && MONO)}>
                {i === 3 ? (
                  <div className="flex flex-col items-center gap-px pr-1 pl-[18px] text-[15px] text-[#f00]">
                    <span>2850</span><span className="h-[3px] w-full bg-black" />
                  </div>
                ) : v}
              </td>
            ))}
          </tr>
          <tr className="h-[27px]">
            <td className="border-r border-b border-[#c4c4c4] bg-[#eee] p-0 text-center text-sm text-[#555]">2</td>
            {COLS.map((c) => <td key={c} className={cell} />)}
          </tr>
        </tbody>
      </table>
      <div className="absolute bottom-1 left-4 h-2.5 w-[928px] rounded-full bg-[#cbcbcb]" />
      <svg width="20" height="58" viewBox="0 0 20 58" className="pointer-events-none absolute top-[72px] left-[860px]" aria-hidden="true">
        <path d="M10 0l10 17-5-2-3.500 41h-1L6 15l-6 2z" fill="#ff2412" />
      </svg>
    </div>
  );
};

const EditorTools = () => (
  <div className="flex h-[39px] shrink-0 items-center gap-[13px] border-b border-[#c9ccd1] pl-1 text-[#333]">
    <div className="flex items-center gap-4 pr-1">
      {[['首行', 'M1 0v16M12 5L5 8l7 3', 1], ['上一行', 'M11 5L4 8l7 3', 1], ['下一行', 'M3 5l7 3-7 3'], ['末行', 'M12 0v16M1 5l7 3-7 3']].map(([n, d, off]) => (
        <button key={n} aria-label={n} className={off ? 'text-[#a5a5a5]' : 'text-[#333]'}>
          <svg width="10" height="16" viewBox="0 0 13 16" fill="none" stroke="currentColor" strokeWidth="1.600"><path d={d} /></svg>
        </button>
      ))}
    </div>
    <div className="flex gap-4 pr-1 text-[#b5b5b5]">
      <button aria-label="上移">
        <svg width="16" height="18" viewBox="0 0 17 18" fill="none" stroke="currentColor"><path d="M1 1h15v16H1z" strokeWidth="1.500" /><path d="M1 16h15" strokeWidth="3" /><path d="M8.500 13V4M4.500 8l4-4 4 4" strokeWidth="2.200" /></svg>
      </button>
      <button aria-label="下移">
        <svg width="16" height="18" viewBox="0 0 17 18" fill="none" stroke="currentColor"><path d="M1 1h15v16H1z" strokeWidth="1.500" /><path d="M1 2h15" strokeWidth="3" /><path d="M8.500 5v9M4.500 10l4 4 4-4" strokeWidth="2.200" /></svg>
      </button>
    </div>
    <ToolButton icon={<Svg size={17}><path d="M5 1h6v4H5M5 19h6v-4H5" stroke="#8c9299" /><path d="M19 8h-7v4h7" fill="#cfe2f9" /><path d="M9 10H1M4 6l-4 4 4 4" stroke="#f07c2a" strokeWidth="2.500" /></Svg>}>插入</ToolButton>
    <ToolButton icon={<DeleteIcon />}>删除</ToolButton>
    <ToolButton icon={<Svg size={18}><path d="M2 3h15M13 1l4 2-4 2" stroke="#f07c2a" /><path d="M1 1v4M19 1v4" /><path d="M2 7v12M5.500 9v10M9 12v7M12 14v5M15 16v3M18 17v2" stroke="#8c9299" /></Svg>}>缩尺配筋</ToolButton>
    <ToolButton icon={<Svg size={18}><path d="M2 1h11l5 5v13H2zM13 1v5h5" fill="#e3effc" /><path d="M5 8h6M5 11h8M5 14h5" stroke="#8c9299" /></Svg>}>钢筋信息</ToolButton>
    <ToolButton icon={<Svg size={19}><path d="M1 2h18v16H1z" fill="#fff" /><path d="M1 2h18v4H1z" fill="#4a90dd" /><path d="M4 8v5M4 11h11v-2M15 13v-2" stroke="#8c9299" /><path d="M4 15.500h12" stroke="#f7a440" strokeDasharray="2 1" strokeWidth="1.800" /></Svg>}>钢筋图库</ToolButton>
    <ToolButton caret icon={<Svg size={19}><path d="M8 19H2V1h9l5 5v3M11 1v5h5" fill="#e3effc" /><circle cx="13.500" cy="14" r="4" stroke="#f07c2a" strokeWidth="3" /><path d="M13.500 7.500v3" stroke="#f07c2a" strokeWidth="2" /></Svg>}>其他</ToolButton>
    <span>单构件钢筋总重(kg)：1.126</span>
  </div>
);

const App = () => (
  <div className="flex h-screen min-w-[1300px] flex-col overflow-hidden bg-[#eee] font-['Open_Sans','Noto_Sans_CJK_SC',sans-serif] text-[15px] leading-5 text-[#222]">
    <TopBar />
    <Ribbon />
    <ComboBar />
    <div className="flex min-h-0 flex-1 bg-white">
      <NavTree />
      <div className="ml-1.5 flex w-[350px] shrink-0 flex-col gap-[5px]">
        <ComponentList />
        <PropertyPanel />
      </div>
      <main className="relative ml-1 flex min-w-0 flex-1 flex-col">
        <div className="relative h-[444px] shrink-0 overflow-hidden">
          <Drawing />
          <DisplayPanel />
          <ViewTools />
          <Meter />
        </div>
        <button aria-label="折叠左侧" className="absolute top-[161px] -left-1.5 flex h-[124px] w-1.5 items-center justify-center bg-[#5f6875]">
          <svg width="4" height="8" viewBox="0 0 4 8"><path d="M4 0v8L0 4z" fill="#d0d3d8" /></svg>
        </button>
        <div className="flex h-1.5 shrink-0 justify-center bg-white">
          <button aria-label="折叠下方" className="flex h-[5px] w-[125px] items-center justify-center bg-[#5f6875]">
            <svg width="8" height="4" viewBox="0 0 8 4"><path d="M0 0h8L4 4z" fill="#d0d3d8" /></svg>
          </button>
        </div>
        <section className="flex min-h-0 flex-1 flex-col bg-[#eee]">
          <PanelStrip />
          <div className="flex h-7 shrink-0 items-center border border-[#c9ccd1] pl-[11px] text-[#7c7c7c]">编辑钢筋</div>
          <div className="mt-2.5 mr-[11px] mb-2.5 ml-3 flex min-h-0 flex-1 flex-col border border-[#c3c9ce]">
            <EditorTools />
            <RebarTable />
          </div>
        </section>
      </main>
    </div>
  </div>
);

export default App;
